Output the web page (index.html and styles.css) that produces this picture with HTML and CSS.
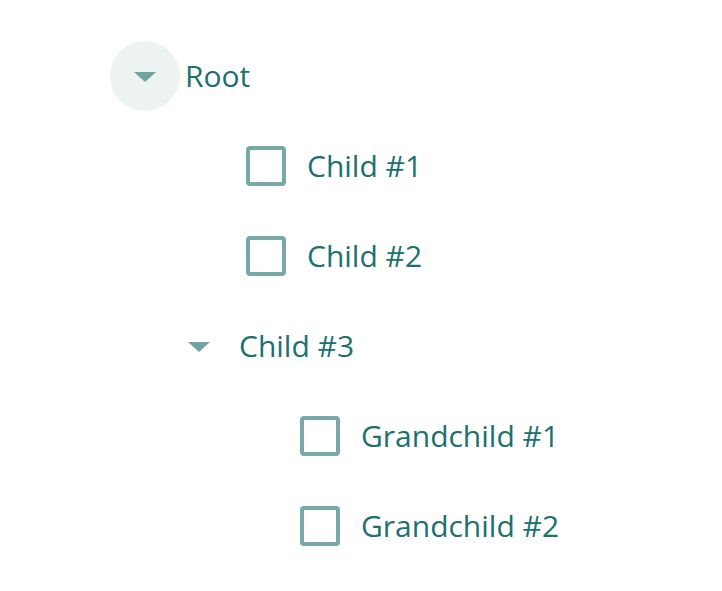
FILE: index.html
```html
<!DOCTYPE html>
<html>
<head>
<meta charset="utf-8">
<link rel="stylesheet" href="styles.css">
</head>
<body>
<div class="tree">
  <div class="node">
    <div class="row">
      <span class="toggle active"><span class="tri"></span></span>
      <span class="label">Root</span>
    </div>
    <div class="children">
      <div class="row leaf">
        <span class="box"></span>
        <span class="label">Child #1</span>
      </div>
      <div class="row leaf">
        <span class="box"></span>
        <span class="label">Child #2</span>
      </div>
      <div class="node">
        <div class="row">
          <span class="toggle"><span class="tri"></span></span>
          <span class="label">Child #3</span>
        </div>
        <div class="children">
          <div class="row leaf">
            <span class="box"></span>
            <span class="label">Grandchild #1</span>
          </div>
          <div class="row leaf">
            <span class="box"></span>
            <span class="label">Grandchild #2</span>
          </div>
        </div>
      </div>
    </div>
  </div>
</div>
</body>
</html>
```
FILE: styles.css
```css
html, body {
  margin: 0;
  background: #ffffff;
}
.tree {
  padding: 31px 0 0 110px;
  font-family: "Open Sans", "Noto Sans", sans-serif;
  color: #20706f;
}
.children {
  padding-left: 54px;
}
.row {
  display: flex;
  align-items: center;
  height: 90px;
}
.toggle {
  width: 70px;
  height: 70px;
  border-radius: 50%;
  display: flex;
  align-items: center;
  justify-content: center;
  margin-right: 5px;
  flex: none;
}
.toggle.active {
  background: #edf3f3;
}
.tri {
  width: 0;
  height: 0;
  border-left: 11px solid transparent;
  border-right: 11px solid transparent;
  border-top: 10px solid #6fa4a1;
  margin-top: 2px;
}
.leaf {
  padding-left: 82px;
}
.box {
  width: 40px;
  height: 40px;
  box-sizing: border-box;
  border: 4px solid #78a9a7;
  border-radius: 4px;
  margin-right: 21px;
  flex: none;
}
.label {
  font-size: 30px;
  line-height: 1;
  margin-top: 0;
}
```
